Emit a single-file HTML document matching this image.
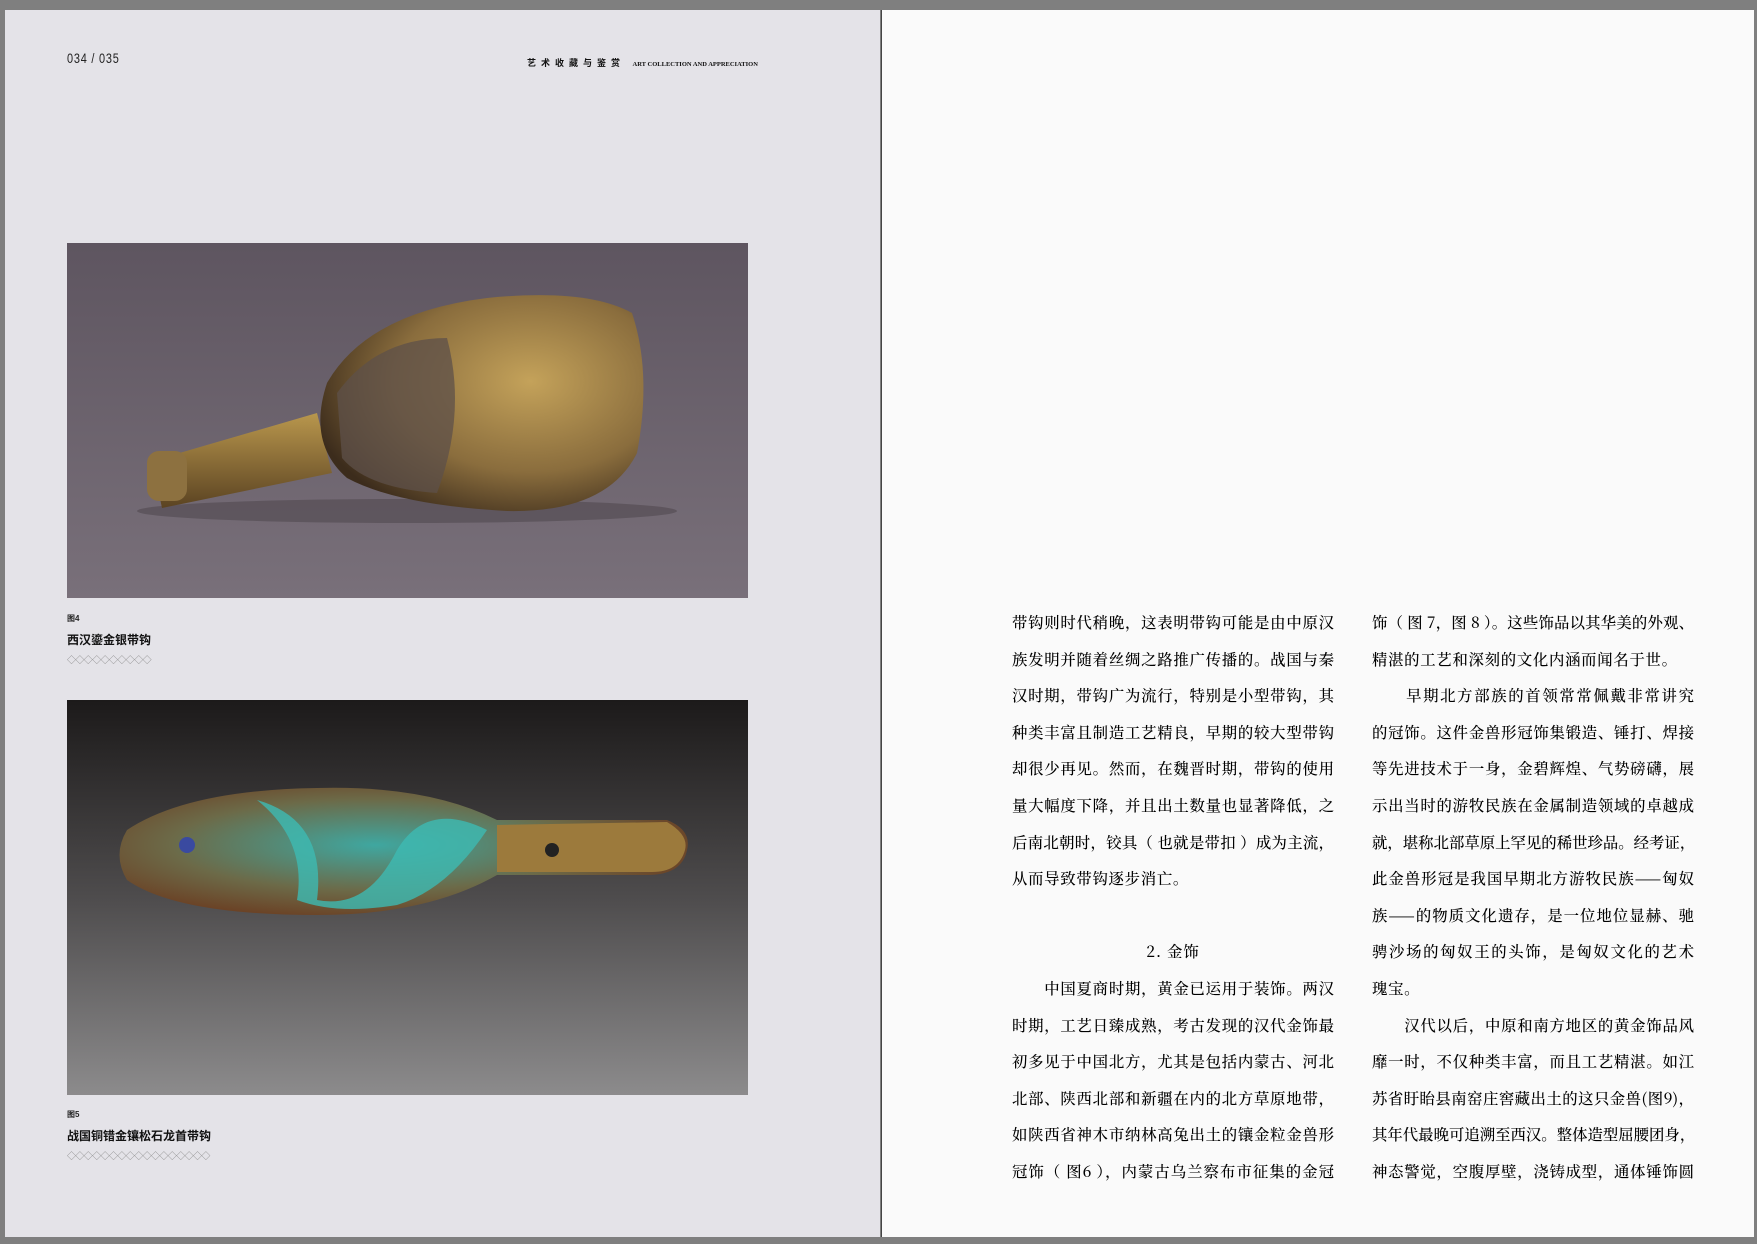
<!DOCTYPE html>
<html><head><meta charset="utf-8">
<style>
*{margin:0;padding:0;box-sizing:border-box}
body{width:1757px;height:1244px;background:#7f7f7f;position:relative;overflow:hidden;font-family:"Liberation Sans","Noto Sans CJK SC",sans-serif}
.lp{position:absolute;left:5px;top:10px;width:875px;height:1227px;background:#e4e3e8}
.rp{position:absolute;left:881px;top:10px;width:873px;height:1227px;background:#fafafa;border-left:1px solid #444}
.abs{position:absolute}
.col{position:absolute;width:322px;font-family:"Noto Serif CJK SC",serif;font-size:15.4px;line-height:36.6px;color:#000;font-weight:500}
.col div{text-align:justify;text-align-last:justify;text-justify:inter-character;white-space:nowrap;height:36.6px}
.col div.l{text-align-last:left;letter-spacing:0.7px}
.col div.h{text-align-last:center;text-align:center;letter-spacing:1px}
.dia{color:#888;font-size:9px;letter-spacing:-0.6px;white-space:nowrap}
</style></head><body>
<div class="lp"></div>
<div class="rp"></div>

<div class="abs" style="left:67px;top:50px;font-size:14px;color:#222;letter-spacing:1px;transform:scaleX(0.78);transform-origin:left">034 / 035</div>
<div class="abs" style="left:527px;top:56px;font-size:9px;font-weight:bold;color:#111;letter-spacing:5px;white-space:nowrap">艺术收藏与鉴赏 <span style="font-family:'Liberation Serif',serif;font-size:6.5px;letter-spacing:0">ART COLLECTION AND APPRECIATION</span></div>

<svg class="abs" style="left:67px;top:243px" width="681" height="355" viewBox="0 0 681 355">
<defs>
<linearGradient id="g1" x1="0" y1="0" x2="0" y2="1"><stop offset="0" stop-color="#5e5560"/><stop offset="1" stop-color="#79707a"/></linearGradient>
<radialGradient id="b1" cx="0.65" cy="0.4" r="0.7"><stop offset="0" stop-color="#c4a25a"/><stop offset="0.6" stop-color="#8a6d3d"/><stop offset="1" stop-color="#3c2c1c"/></radialGradient>
<linearGradient id="n1" x1="0" y1="0" x2="0" y2="1"><stop offset="0" stop-color="#b9974d"/><stop offset="1" stop-color="#5b4322"/></linearGradient>
</defs>
<rect width="681" height="355" fill="url(#g1)"/>
<ellipse cx="340" cy="268" rx="270" ry="12" fill="#4a4248" opacity="0.5"/>
<path d="M85 218 L250 170 L265 230 L95 265 Z" fill="url(#n1)"/>
<rect x="80" y="208" width="40" height="50" rx="12" fill="#8d7140"/>
<path d="M260 140 Q300 70 420 55 Q520 45 565 70 Q585 130 570 210 Q540 270 440 268 Q330 262 280 235 Q240 200 260 140 Z" fill="url(#b1)"/>
<path d="M270 150 Q310 95 380 95 Q400 170 370 250 Q300 245 275 215 Z" fill="#5e5049" opacity="0.75"/>
</svg>

<div class="abs" style="left:67px;top:613px;font-size:8px;font-weight:bold;color:#222">图4</div>
<div class="abs" style="left:67px;top:631px;font-size:12px;font-weight:bold;color:#111">西汉鎏金银带钩</div>
<div class="abs dia" style="left:67px;top:653px">◇◇◇◇◇◇◇◇◇◇</div>

<svg class="abs" style="left:67px;top:700px" width="681" height="395" viewBox="0 0 681 395">
<defs>
<linearGradient id="g2" x1="0" y1="0" x2="0" y2="1"><stop offset="0" stop-color="#1c1a1a"/><stop offset="0.5" stop-color="#4e4c4d"/><stop offset="1" stop-color="#8c8b8c"/></linearGradient>
<radialGradient id="b2" cx="0.45" cy="0.45" r="0.6"><stop offset="0" stop-color="#3fa7a0"/><stop offset="0.6" stop-color="#6c6a48"/><stop offset="1" stop-color="#6b3e22"/></radialGradient>
</defs>
<rect width="681" height="395" fill="url(#g2)"/>
<path d="M60 130 Q120 90 250 88 Q360 85 430 120 L600 120 Q625 130 620 150 Q615 175 580 175 L430 175 Q360 215 250 215 Q110 215 60 180 Q45 155 60 130 Z" fill="url(#b2)"/>
<path d="M190 100 Q260 120 250 200 Q300 210 330 150 Q360 100 420 130 Q380 190 330 205 Q270 215 230 200 Q240 140 190 100 Z" fill="#3dbab3" opacity="0.8"/>
<path d="M430 125 L600 122 Q622 135 618 150 Q612 172 585 172 L430 172 Z" fill="#9c7a3c"/>
<circle cx="120" cy="145" r="8" fill="#3a4aa0"/>
<circle cx="485" cy="150" r="7" fill="#222"/>
</svg>

<div class="abs" style="left:67px;top:1109px;font-size:8px;font-weight:bold;color:#222">图5</div>
<div class="abs" style="left:67px;top:1127px;font-size:12px;font-weight:bold;color:#111">战国铜错金镶松石龙首带钩</div>
<div class="abs dia" style="left:67px;top:1149px">◇◇◇◇◇◇◇◇◇◇◇◇◇◇◇◇◇</div>

<div class="col" style="left:1012px;top:604px">
<div>带钩则时代稍晚，这表明带钩可能是由中原汉</div>
<div>族发明并随着丝绸之路推广传播的。战国与秦</div>
<div>汉时期，带钩广为流行，特别是小型带钩，其</div>
<div>种类丰富且制造工艺精良，早期的较大型带钩</div>
<div>却很少再见。然而，在魏晋时期，带钩的使用</div>
<div>量大幅度下降，并且出土数量也显著降低，之</div>
<div>后南北朝时，铰具（ 也就是带扣 ）成为主流，</div>
<div class="l">从而导致带钩逐步消亡。</div>
<div></div>
<div class="h">2. 金饰</div>
<div>　　中国夏商时期，黄金已运用于装饰。两汉</div>
<div>时期，工艺日臻成熟，考古发现的汉代金饰最</div>
<div>初多见于中国北方，尤其是包括内蒙古、河北</div>
<div>北部、陕西北部和新疆在内的北方草原地带，</div>
<div>如陕西省神木市纳林高兔出土的镶金粒金兽形</div>
<div>冠饰（ 图6 ），内蒙古乌兰察布市征集的金冠</div>
</div>

<div class="col" style="left:1372px;top:604px">
<div>饰（ 图 7，图 8 ）。这些饰品以其华美的外观、</div>
<div class="l">精湛的工艺和深刻的文化内涵而闻名于世。</div>
<div>　　早期北方部族的首领常常佩戴非常讲究</div>
<div>的冠饰。这件金兽形冠饰集锻造、锤打、焊接</div>
<div>等先进技术于一身，金碧辉煌、气势磅礴，展</div>
<div>示出当时的游牧民族在金属制造领域的卓越成</div>
<div>就，堪称北部草原上罕见的稀世珍品。经考证，</div>
<div>此金兽形冠是我国早期北方游牧民族——匈奴</div>
<div>族——的物质文化遗存，是一位地位显赫、驰</div>
<div>骋沙场的匈奴王的头饰，是匈奴文化的艺术</div>
<div class="l">瑰宝。</div>
<div>　　汉代以后，中原和南方地区的黄金饰品风</div>
<div>靡一时，不仅种类丰富，而且工艺精湛。如江</div>
<div>苏省盱眙县南窑庄窖藏出土的这只金兽(图9)，</div>
<div>其年代最晚可追溯至西汉。整体造型屈腰团身，</div>
<div>神态警觉，空腹厚壁，浇铸成型，通体锤饰圆</div>
</div>
</body></html>
